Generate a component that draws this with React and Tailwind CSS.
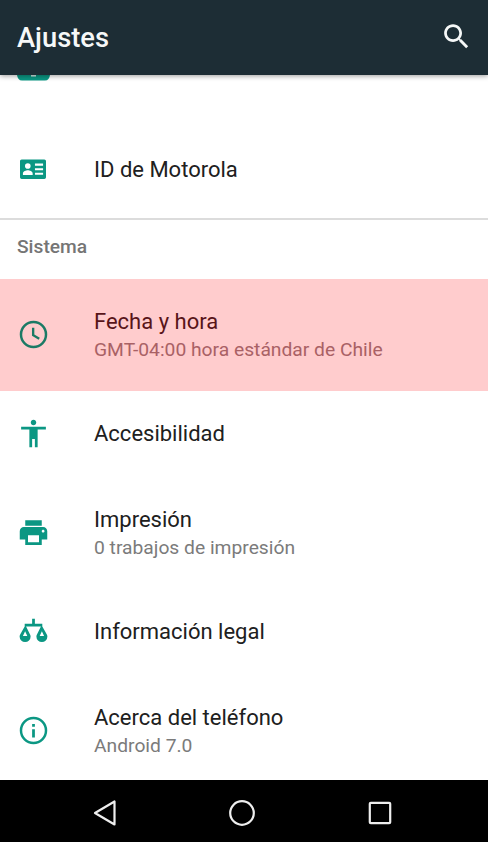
import clsx from 'clsx';

const icons = {
    idCard: 'M22.5 3.300H1.500C.7 3.300 0 4 0 4.800v14.900c0 .8.700 1.500 1.500 1.500h21c.8 0 1.500-.7 1.500-1.500V4.800c0-.8-.7-1.500-1.500-1.500zM7.200 6.600a2.600 2.600 0 1 1 0 5.200 2.600 2.600 0 0 1 0-5.200zM11.700 17.500H2.700v-1.300c0-1.900 2.900-3 4.500-3s4.500 1.100 4.500 3zM21.300 17.400h-7.500v-2h7.500zM21.300 13.200h-7.500v-2h7.500zM21.300 9h-7.500V7h7.500z',
    clock: 'M12 2a10 10 0 1 0 0 20 10 10 0 0 0 0-20zM12 20.200a8.200 8.200 0 1 1 0-16.400 8.200 8.200 0 0 1 0 16.400zM12.600 7h-1.700v5.900l4.800 2.900.9-1.400-4-2.400z',
    accessibility: 'M12 2c1.1 0 2 .9 2 2s-.9 2-2 2-2-.9-2-2 .9-2 2-2zm9 7h-6v13h-2v-6h-2v6H9V9H3V7h18v2z',
    print: 'M19 8H5c-1.66 0-3 1.34-3 3v6h4v4h12v-4h4v-6c0-1.66-1.34-3-3-3zm-3 11H8v-5h8v5zm3-7c-.55 0-1-.45-1-1s.45-1 1-1 1 .45 1 1-.45 1-1 1zm-1-9H6v4h12V3z',
    legal: 'M11 2.800h2v3.500h5.400v2.100l3.100 5.400c.4.700.6 1.300.6 1.900a4 4 0 0 1-8 0c0-.6.2-1.200.6-1.900l2.700-5.400H6.600l2.700 5.400c.4.700.6 1.300.6 1.900a4 4 0 0 1-8 0c0-.6.2-1.200.6-1.900l3.100-5.400V6.300H11zM5.900 11.800l-1.600 3.400h3.200zM18.100 11.800l-1.600 3.400h3.200z',
    info: 'M11 17h2v-6h-2v6zM12 2a10 10 0 1 0 0 20 10 10 0 0 0 0-20zm0 18.200a8.200 8.200 0 1 1 0-16.400 8.200 8.200 0 0 1 0 16.400zM11 9.200h2V7.300h-2v1.900z',
};

function Icon({ name, className }) {
    return (
        <svg viewBox="0 0 24 24" fill="currentColor" fillRule="evenodd" className={clsx('shrink-0', className)}>
            <path d={icons[name]} />
        </svg>
    );
}

function Row({ icon, title, summary, active, iconClass = 'size-[33px]', className }) {
    return (
        <div className={clsx('flex shrink-0 items-center pl-[17px]', summary ? 'h-[112px]' : 'h-[86px]', active && 'bg-[#ffcccd]', className)}>
            <div className={clsx('flex w-[77px] shrink-0', summary ? 'pb-[2px]' : 'pb-[1px]', active ? 'text-[#1c7a65]' : 'text-[#0b9783]')}>
                <Icon name={icon} className={iconClass} />
            </div>
            <div className={clsx('whitespace-nowrap', summary && 'pt-[2px]')}>
                <p className={clsx('text-[22px] leading-[28px]', active ? 'text-[#581419]' : 'text-[#202020]')}>{title}</p>
                {summary && (
                    <p className={clsx('text-[19.25px] leading-[28px]', active ? 'text-[#a96165]' : 'text-[#7b7b7b]')}>{summary}</p>
                )}
            </div>
        </div>
    );
}

export default function App() {
    return (
        <div className="flex h-[842px] w-[488px] flex-col overflow-hidden bg-white font-['Roboto',sans-serif]">
            <header className="z-10 flex h-[75px] shrink-0 items-center justify-between bg-[#1d2d35] pr-[15px] pl-[17px] shadow-[0_1px_5px_rgba(0,0,0,0.4)]">
                <h1 className="pt-[2px] text-[27.3px] leading-none font-medium text-[#f6f8f8]">Ajustes</h1>
                <svg viewBox="0 0 24 24" fill="#f6f8f8" className="mb-[2px] size-[33px]">
                    <path d="M15.5 14h-.79l-.28-.27C15.41 12.59 16 11.11 16 9.5 16 5.91 13.09 3 9.5 3S3 5.91 3 9.5 5.91 16 9.5 16c1.61 0 3.09-.59 4.23-1.57l.27.28v.79l5 4.99L20.49 19l-4.99-5zm-6 0C7.01 14 5 11.99 5 9.5S7.01 5 9.5 5 14 7.01 14 9.5 11.99 14 9.5 14z" />
                </svg>
            </header>

            <main className="flex min-h-0 flex-1 flex-col overflow-hidden">
                {/* tail of the row scrolled under the toolbar */}
                <div className="flex h-[52px] shrink-0 items-start pl-[17px]">
                    <svg viewBox="0 0 33 6" className="h-[6px] w-[33px]">
                        <path d="M0 0h33c-.5 3.500-2 5.500-5 5.500H5C2 5.500.5 3.500 0 0z" fill="#0b9783" />
                        <path d="M14 0h5v1.500h-5z" fill="#d5eeea" />
                    </svg>
                </div>
                <Row icon="idCard" title="ID de Motorola" iconClass="size-[26px] ml-[3px] mb-[2px]" />
                <div className="mt-[5px] h-[1.5px] shrink-0 bg-[#dcdcdc]" />
                <h2 className="flex h-[59.5px] shrink-0 items-center pb-[4px] pl-[17px] text-[19.2px] font-medium text-[#757575]">Sistema</h2>
                <Row icon="clock" title="Fecha y hora" summary="GMT-04:00 hora estándar de Chile" active />
                <Row icon="accessibility" title="Accesibilidad" />
                <Row icon="print" title="Impresión" summary="0 trabajos de impresión" />
                <Row icon="legal" title="Información legal" />
                <Row icon="info" title="Acerca del teléfono" summary="Android 7.0" />
            </main>

            <nav className="flex h-[62px] shrink-0 items-center justify-between bg-black pt-[4px] pr-[96px] pl-[92px]">
                <svg viewBox="0 0 26 28" fill="none" stroke="#eee" strokeWidth="2.2" strokeLinejoin="round" className="h-[28px] w-[26px]">
                    <path d="M22.5 2.500v23L3 14z" />
                </svg>
                <svg viewBox="0 0 28 28" fill="none" stroke="#eee" strokeWidth="2.2" className="mr-[3px] size-[28px]">
                    <circle cx="14" cy="14" r="11.8" />
                </svg>
                <svg viewBox="0 0 24 24" fill="none" stroke="#eee" strokeWidth="2.2" className="size-[24px]">
                    <rect x="1.8" y="1.8" width="20.4" height="20.4" rx="1" />
                </svg>
            </nav>
        </div>
    );
}
